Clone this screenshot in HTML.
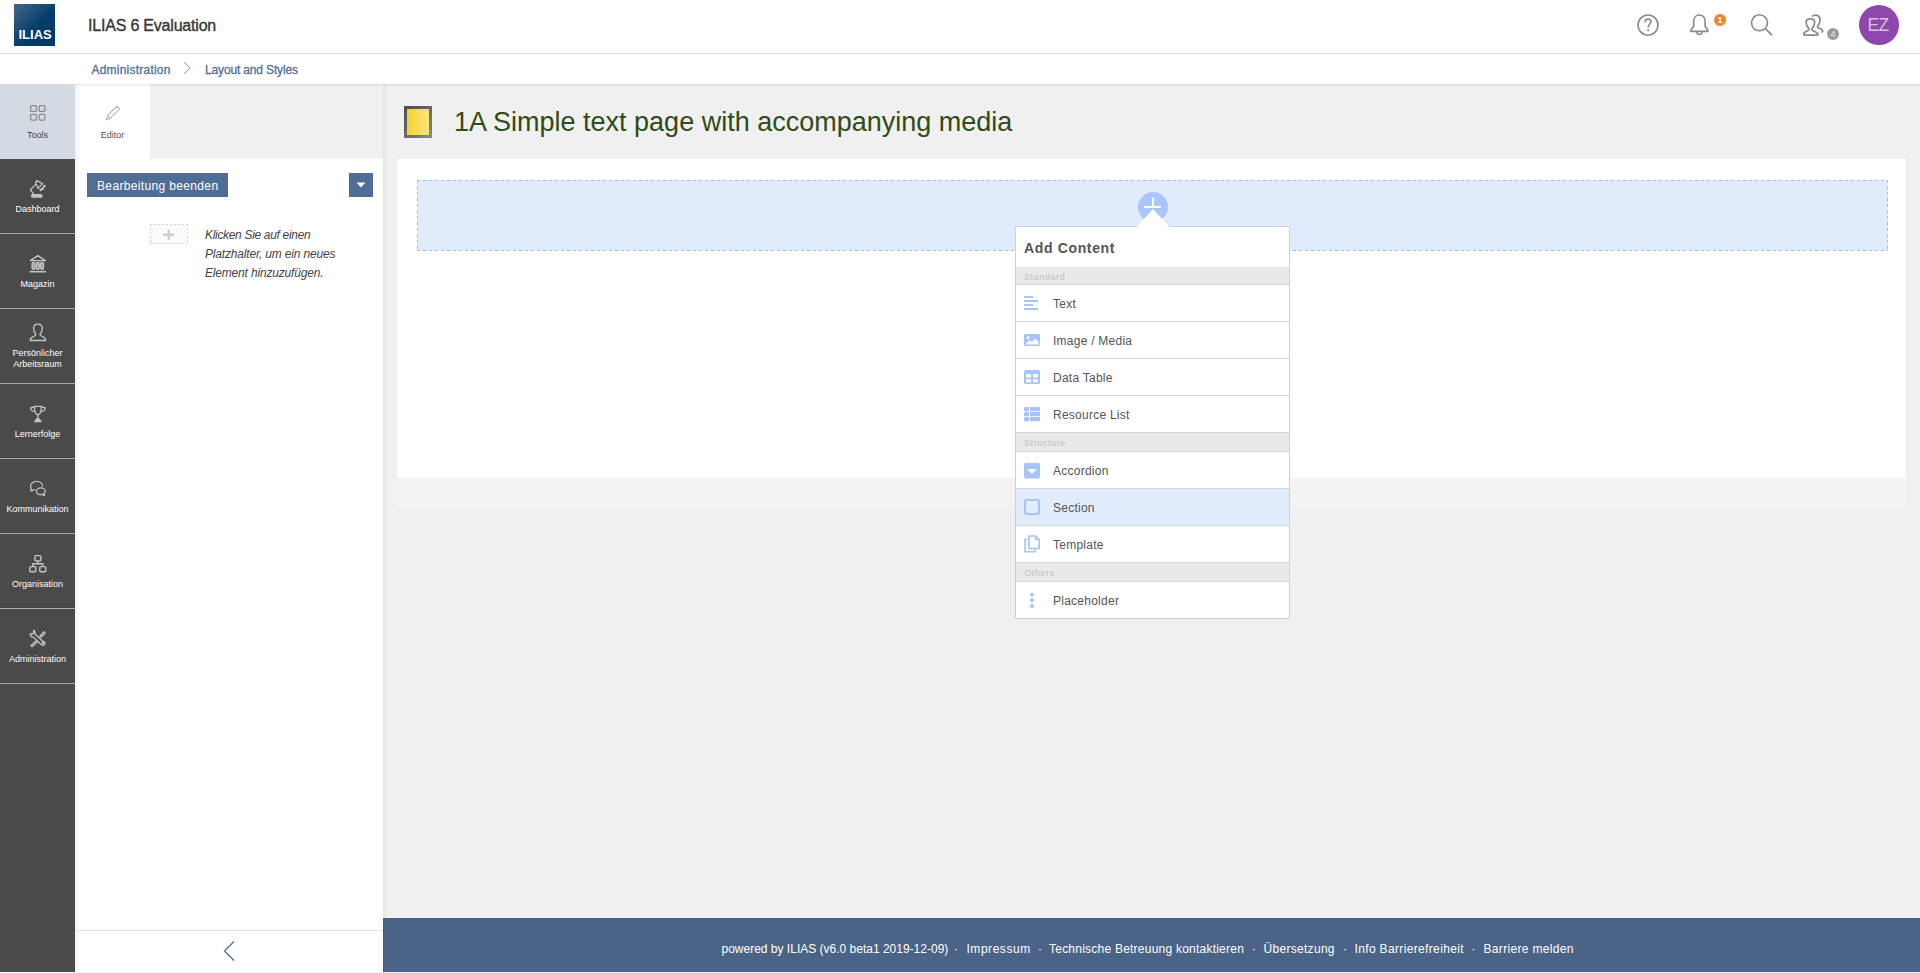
<!DOCTYPE html>
<html><head><meta charset="utf-8">
<style>
*{box-sizing:border-box;margin:0;padding:0}
html,body{width:1920px;height:973px;overflow:hidden;background:#fff;font-family:"Liberation Sans",sans-serif;position:relative}
.a{position:absolute}
.nw{white-space:nowrap}
#hdr{left:0;top:0;width:1920px;height:54px;background:#fff;border-bottom:1px solid #dcdcdc}
#logo{left:14px;top:4px;width:41px;height:42px;background:linear-gradient(135deg,#45668c 0%,#21507b 30%,#053c69 55%,#023864 100%)}
#logo span{position:absolute;left:4.5px;top:24px;font-size:13px;font-weight:bold;color:#fff;letter-spacing:0px;line-height:14px}
#title{left:88px;top:18px;font-size:16px;line-height:16px;color:#383838;-webkit-text-stroke:0.38px #383838;letter-spacing:-0.2px}
.bc{top:64px;font-size:12px;line-height:12px;color:#557196;-webkit-text-stroke:0.32px #557196}
#main{left:383px;top:84px;width:1537px;height:889px;background:#f0f0f0}
#mainshadow{left:383px;top:84px;width:1537px;height:3px;background:linear-gradient(#dedede,#efefef)}
#mbar{left:0;top:84px;width:75px;height:888px;background:#4a4a4a}
.mi{position:absolute;left:0;width:75px;height:75px;border-bottom:1px solid #aaa;box-shadow:inset 0 -1px 0 #434343}
.lbl{position:absolute;left:0;width:75px;text-align:center;font-size:9px;color:#fff;line-height:11px;white-space:nowrap}
.ic{position:absolute;left:24px}
#slate{left:75px;top:84px;width:308px;height:888px;background:#fff}
#slateshadow{left:383px;top:84px;width:5px;height:834px;background:linear-gradient(90deg,#e3e3e3,#f0f0f0)}
#footer{left:383px;top:918px;width:1537px;height:54px;background:#4b6386}
.ft{top:942.5px;font-size:12px;line-height:12px;color:#fff;white-space:nowrap}
#footer .t{position:absolute;left:-3px;top:24.5px;width:1537px;text-align:center;font-size:12px;line-height:12px;color:#fff;white-space:nowrap;letter-spacing:0.24px}
.pi{position:absolute;left:1px;width:273px;height:37px;border-bottom:1px solid #d6d6d6;background:#fff}
.pi .l{position:absolute;left:37px;top:13px;font-size:12px;line-height:12px;color:#555;white-space:nowrap;letter-spacing:0.25px}
.pi svg{position:absolute;left:8px}
.ps{position:absolute;left:1px;width:273px;height:19px;border-bottom:1px solid #d6d6d6;background:#e9e9e9}
.ps .l{position:absolute;left:8px;top:6px;font-size:9px;line-height:9px;color:#c0c0c0;white-space:nowrap;letter-spacing:0.6px}
</style></head><body>
<div id="hdr" class="a"></div>
<div id="logo" class="a"><span>ILIAS</span></div>
<div id="title" class="a nw">ILIAS 6 Evaluation</div>
<span class="a bc nw" style="left:91.5px;letter-spacing:0.22px">Administration</span>
<svg class="a" style="left:182px;top:61px" width="10" height="14"><path d="M2 1 L8 7 L2 13" fill="none" stroke="#b5b5b5" stroke-width="1.1"/></svg>
<span class="a bc nw" style="left:205px;letter-spacing:-0.15px">Layout and Styles</span>

<!-- header right icons -->
<svg class="a" style="left:1636px;top:13px" width="24" height="24" viewBox="0 0 24 24">
 <circle cx="12" cy="12" r="10" fill="none" stroke="#8a8a8a" stroke-width="1.6"/>
 <path d="M9 9.3 C9 6.8 10.5 6 12 6 C13.6 6 15 7 15 8.8 C15 10.6 12.6 11 12.3 13.6 L12.3 14.6" fill="none" stroke="#8a8a8a" stroke-width="1.6"/>
 <circle cx="12.2" cy="17.3" r="1.1" fill="#8a8a8a"/>
</svg>
<svg class="a" style="left:1688px;top:13px" width="24" height="24" viewBox="0 0 24 24">
 <path d="M11.4 2.05 C8 2.05 5.7 4.5 5.7 8 L5.7 13.2 L2.9 17.3 C2.5 18 2.8 18.4 3.5 18.4 L19.3 18.4 C20 18.4 20.3 18 19.9 17.3 L17.1 13.2 L17.1 8 C17.1 4.5 14.8 2.05 11.4 2.05 Z" fill="none" stroke="#8a8a8a" stroke-width="1.6" stroke-linejoin="round"/>
 <path d="M8.7 18.8 A2.7 2.7 0 0 0 14.1 18.8" fill="none" stroke="#8a8a8a" stroke-width="1.5"/>
</svg>
<div class="a" style="left:1714px;top:14px;width:12px;height:12px;border-radius:6px;background:#f5822a"></div>
<div class="a" style="left:1714px;top:15px;width:12px;font-size:9px;line-height:10px;text-align:center;color:#fff;font-weight:bold">1</div>
<svg class="a" style="left:1748px;top:12px" width="28" height="28" viewBox="0 0 28 28">
 <circle cx="11.5" cy="10.8" r="8" fill="none" stroke="#8a8a8a" stroke-width="1.6"/>
 <path d="M17.3 16.5 L24 23.3" stroke="#8a8a8a" stroke-width="1.7"/>
</svg>
<svg class="a" style="left:1800px;top:12px" width="28" height="28" viewBox="0 0 28 28">
 <path d="M3.6 22.3 C3.6 20.6 5 19.9 7.3 18.9 C8.7 18.3 9.4 17.9 9.1 17 C7.3 15 6.1 12.6 6.1 10.4 C6.1 7.8 7.9 6.8 10.4 6.8 C12.9 6.8 14.7 7.8 14.7 10.4 C14.7 12.6 13.5 15 11.7 17 C11.4 17.9 12.1 18.3 13.5 18.9 C15.8 19.9 17.9 20.6 17.9 22.3 C17.9 22.9 17.5 23.1 16.8 23.1 L4.6 23.1 C4 23.1 3.6 22.9 3.6 22.3 Z" fill="none" stroke="#8a8a8a" stroke-width="1.75" stroke-linejoin="round"/>
 <path d="M12 4.4 C12.9 3.5 14 3.1 15.4 3.1 C18.2 3.1 20 4.9 20 7.8 C20 10.2 19.1 12.5 17.4 14.5 C17.2 15.3 17.9 15.7 19.4 16.4 C21.5 17.3 22.8 17.8 22.8 19.1 C22.8 19.7 22.3 20 21.3 20" fill="none" stroke="#8a8a8a" stroke-width="1.75" stroke-linejoin="round"/>
</svg>
<div class="a" style="left:1827px;top:28px;width:12px;height:12px;border-radius:6px;background:#9a9a9a"></div>
<div class="a" style="left:1827px;top:29px;width:12px;font-size:9px;line-height:10px;text-align:center;color:#e8e8f0">4</div>
<div class="a" style="left:1859px;top:5px;width:40px;height:40px;border-radius:20px;background:#8e47ad"></div>
<div class="a" style="left:1858px;top:14.5px;width:40px;font-size:19px;line-height:19px;text-align:center;color:#d8c3e3;letter-spacing:-0.8px;transform:scaleX(0.92)">EZ</div>

<div id="main" class="a"></div>


<!-- main bar -->
<div id="mbar" class="a"></div>
<div class="a" style="left:0;top:84px;width:75px;height:75px;background:#d3dae4"></div>
<svg class="ic" style="top:99px" width="28" height="28" viewBox="0 0 28 28" fill="none" stroke="#8a8a8a" stroke-width="1.3">
 <rect x="6.6" y="6.6" width="5.8" height="5.8" rx="1"/><rect x="15.1" y="6.6" width="5.8" height="5.8" rx="1"/>
 <rect x="6.6" y="15.3" width="5.8" height="5.8" rx="1"/><rect x="15.1" y="15.3" width="5.8" height="5.8" rx="1"/>
</svg>
<div class="lbl a" style="top:130px;color:#444">Tools</div>

<div class="mi" style="top:159px"></div>
<svg class="ic" style="top:174px" width="28" height="28" viewBox="0 0 28 28" fill="none" stroke="#c4c4c4" stroke-width="1.3" stroke-linejoin="round" stroke-linecap="round">
 <path d="M11.6 8.4 L12.8 6.6 L18.6 9.6 L14.2 14.4 Z"/>
 <path d="M11.4 10.6 L6.5 15.8 L9.8 20.4"/>
 <rect x="7.6" y="20.6" width="10.4" height="2.5" rx="1.2" fill="#c4c4c4"/>
 <circle cx="20.3" cy="12.2" r="0.7" fill="#c4c4c4"/><circle cx="18.9" cy="14.6" r="0.7" fill="#c4c4c4"/><circle cx="16.8" cy="15.8" r="0.7" fill="#c4c4c4"/>
</svg>
<div class="lbl a" style="top:204px">Dashboard</div>

<div class="mi" style="top:234px"></div>
<svg class="ic" style="top:250px" width="28" height="28" viewBox="0 0 28 28" fill="none" stroke="#c4c4c4" stroke-width="1.4" stroke-linejoin="round">
 <path d="M6.4 10.6 L13.8 5.7 L21.4 10.6 Z"/>
 <rect x="8.1" y="12.4" width="2.8" height="7" rx="1.3" fill="#9a9a9a"/><rect x="12.4" y="12.4" width="2.8" height="7" rx="1.3" fill="#9a9a9a"/><rect x="16.7" y="12.4" width="2.8" height="7" rx="1.3" fill="#9a9a9a"/>
 <path d="M5.8 21.7 L22 21.7" stroke-width="1.6"/>
</svg>
<div class="lbl a" style="top:279px">Magazin</div>

<div class="mi" style="top:309px"></div>
<svg class="ic" style="top:318px" width="28" height="28" viewBox="0 0 28 28" fill="none" stroke="#c4c4c4" stroke-width="1.3" stroke-linejoin="round">
 <path d="M6.2 22.5 L21.6 22.5 C21.9 20.2 21 19.6 18.7 18.6 C16.6 17.7 15.8 17.3 15.9 16.6 C17.6 14.6 18.3 12.4 18.3 10.6 C18.3 8 16.5 6.2 13.9 6.2 C11.3 6.2 9.6 8 9.6 10.6 C9.6 12.4 10.3 14.6 11.9 16.6 C12 17.3 11.2 17.7 9.1 18.6 C6.8 19.6 5.9 20.2 6.2 22.5 Z"/>
</svg>
<div class="lbl a" style="top:348px">Persönlicher<br>Arbeitsraum</div>

<div class="mi" style="top:384px"></div>
<svg class="ic" style="top:398px" width="28" height="28" viewBox="0 0 28 28" fill="none" stroke="#c4c4c4" stroke-width="1.3" stroke-linejoin="round">
 <path d="M10.4 8.3 L17.4 8.3 C17.4 12 17.4 16.6 13.9 16.6 C10.4 16.6 10.4 12 10.4 8.3 Z"/>
 <path d="M10.2 9 L6.6 9.8 C6.4 11.8 8 13.4 10.6 13.6"/>
 <path d="M17.6 9 L21.2 9.8 C21.4 11.8 19.8 13.4 17.2 13.6"/>
 <path d="M13.9 16.8 L13.9 21"/>
 <path d="M10.8 23.6 L17 23.6 L15.3 21 L12.5 21 Z" fill="#c4c4c4"/>
</svg>
<div class="lbl a" style="top:429px">Lernerfolge</div>

<div class="mi" style="top:459px"></div>
<svg class="ic" style="top:473px" width="28" height="28" viewBox="0 0 28 28" fill="none" stroke="#c4c4c4" stroke-width="1.3" stroke-linejoin="round">
 <path d="M18.6 13.5 C18.6 10.2 15.9 8.3 12.7 8.3 C9.3 8.3 6.6 10.3 6.6 13.2 C6.6 14.4 7 15.2 7.2 16 L6.9 17.8 L10.8 16.6"/>
 <ellipse cx="16.8" cy="18.3" rx="4.5" ry="3.4"/>
 <path d="M19.8 20.8 L20.6 22.8 L18.4 21.6" fill="#c4c4c4"/>
</svg>
<div class="lbl a" style="top:504px">Kommunikation</div>

<div class="mi" style="top:534px"></div>
<svg class="ic" style="top:548px" width="28" height="28" viewBox="0 0 28 28" fill="none" stroke="#c4c4c4" stroke-width="1.4" stroke-linejoin="round">
 <rect x="10.9" y="7.6" width="6" height="5.3" rx="1"/>
 <path d="M13.9 13 L13.9 15.8 M8.8 18.3 L8.8 15.8 L18.8 15.8 L18.8 18.3"/>
 <rect x="5.8" y="18.6" width="6" height="5.1" rx="1"/>
 <rect x="15.8" y="18.6" width="6" height="5.1" rx="1"/>
</svg>
<div class="lbl a" style="top:579px">Organisation</div>

<div class="mi" style="top:609px"></div>
<svg class="ic" style="top:623px" width="28" height="28" viewBox="0 0 28 28" fill="none" stroke="#c4c4c4" stroke-width="1.3" stroke-linejoin="round" stroke-linecap="round">
 <path d="M6.3 10.6 C5.9 12.6 7.4 14.4 9.4 14.1 L17.1 21.5 C18 22.6 19.9 22.7 20.7 21.4 C21.5 20 20.5 18.1 18.6 18.2 L10.9 10.7 C11.3 9 10.7 7.8 9.6 7.3 L9.7 9.7 L8.1 11.2 Z"/>
 <circle cx="18.9" cy="20" r="0.6" fill="#c4c4c4"/>
 <path d="M16.3 12.6 L19.6 9.2 C20.4 8.4 21.6 9.6 20.8 10.4 L17.5 13.8 C16.7 14.6 15.5 13.4 16.3 12.6 Z"/>
 <path d="M12.2 17.6 L7.4 22.2 C6.6 23 7.8 24.2 8.6 23.4 L13.4 18.8"/>
</svg>
<div class="lbl a" style="top:654px">Administration</div>

<!-- slate -->
<div id="slate" class="a"></div>
<div class="a" style="left:150px;top:84px;width:233px;height:75px;background:#f0f0f0"></div>
<div class="a" style="left:75px;top:84px;width:6px;height:888px;background:linear-gradient(90deg,#f2f2f2,rgba(255,255,255,0))"></div>
<svg class="a" style="left:98px;top:98px" width="28" height="28" viewBox="0 0 28 28" fill="none" stroke="#b8b8b8" stroke-width="1.2" stroke-linejoin="round">
 <path d="M8.2 21.8 L9.4 17.6 L18.9 8.2 L21.6 10.8 L12.2 20.4 Z"/>
 <path d="M9.4 17.6 L12.2 20.4"/>
</svg>
<div class="lbl a" style="left:75px;top:130px;color:#555">Editor</div>

<div class="a" style="left:87px;top:173px;width:141px;height:24px;background:#4f6d95"></div>
<div class="a nw" style="left:97px;top:180px;font-size:12px;line-height:12px;color:#fff;letter-spacing:0.35px">Bearbeitung beenden</div>
<div class="a" style="left:349px;top:173px;width:24px;height:24px;background:#4f6d95"></div>
<svg class="a" style="left:349px;top:173px" width="24" height="24"><path d="M7.5 9.5 L16.5 9.5 L12 14.5 Z" fill="#fff"/></svg>

<div class="a" style="left:150px;top:224px;width:38px;height:20px;background:#fafafa"></div><div class="a" style="left:150px;top:224px;width:38px;height:1px;background:repeating-linear-gradient(90deg,#d6d6d6 0 2px,transparent 2px 4px)"></div><div class="a" style="left:150px;top:243px;width:38px;height:1px;background:repeating-linear-gradient(90deg,#d6d6d6 0 2px,transparent 2px 4px)"></div><div class="a" style="left:150px;top:224px;width:1px;height:20px;background:repeating-linear-gradient(180deg,#d6d6d6 0 2px,transparent 2px 4px)"></div><div class="a" style="left:187px;top:224px;width:1px;height:20px;background:repeating-linear-gradient(180deg,#d6d6d6 0 2px,transparent 2px 4px)"></div>
<svg class="a" style="left:150px;top:224px" width="38" height="20"><path d="M18.9 5.8 L18.9 15.7 M13.2 10.7 L24.1 10.7" stroke="#cdcdcd" stroke-width="2.6"/></svg>
<div class="a nw" style="left:205px;top:226.3px;font-size:12px;line-height:18.7px;color:#444;font-style:italic;letter-spacing:-0.18px"><span style="letter-spacing:-0.32px">Klicken Sie auf einen</span><br>Platzhalter, um ein neues<br>Element hinzuzufügen.</div>

<div class="a" style="left:75px;top:930px;width:308px;height:1px;background:#e2e2e2"></div>
<svg class="a" style="left:220px;top:938px" width="18" height="26"><path d="M14 3.5 L4.5 13 L14 22.5" fill="none" stroke="#4f6d95" stroke-width="1.3"/></svg>

<!-- slate right shadow -->
<div id="slateshadow" class="a"></div>

<div class="a" style="left:75px;top:84px;width:1845px;height:3px;background:linear-gradient(rgba(0,0,0,0.075),rgba(0,0,0,0.03) 50%,rgba(0,0,0,0))"></div>
<!-- content -->
<div class="a" style="left:404px;top:106px;width:28px;height:32px;background:linear-gradient(135deg,#4a4a4a,#8a8a8a)"></div>
<div class="a" style="left:407px;top:109px;width:22px;height:26px;background:linear-gradient(90deg,#f3d232,#fde47c)"></div>
<div class="a nw" style="left:454px;top:107.5px;font-size:27px;line-height:28px;color:#2f4b17">1A Simple text page with accompanying media</div>

<div class="a" style="left:397px;top:159px;width:1509px;height:319px;background:#fff;box-shadow:0 0 1px rgba(0,0,0,0.06)"></div>
<div class="a" style="left:397px;top:478px;width:1509px;height:30px;background:#f3f3f3"></div>
<div class="a" style="left:417px;top:180px;width:1471px;height:71px;background:#e0ebfc"></div><div class="a" style="left:417px;top:180px;width:1471px;height:1px;background:repeating-linear-gradient(90deg,#9dbdf5 0 3px,transparent 3px 6px)"></div><div class="a" style="left:417px;top:250px;width:1471px;height:1px;background:repeating-linear-gradient(90deg,#9dbdf5 0 3px,transparent 3px 6px)"></div><div class="a" style="left:417px;top:180px;width:1px;height:71px;background:repeating-linear-gradient(180deg,#9dbdf5 0 3px,transparent 3px 6px)"></div><div class="a" style="left:1887px;top:180px;width:1px;height:71px;background:repeating-linear-gradient(180deg,#9dbdf5 0 3px,transparent 3px 6px)"></div><div class="a" style="left:1887px;top:250px;width:1px;height:1px;background:#9dbdf5"></div>
<div class="a" style="left:1138px;top:192px;width:30px;height:30px;border-radius:15px;background:#a8c6fa"></div>
<svg class="a" style="left:1138px;top:192px" width="30" height="30"><path d="M15 6 L15 15 M6 15 L23 15" stroke="#fff" stroke-width="2"/></svg>

<!-- popover -->
<div class="a" style="left:1015px;top:226px;width:275px;height:393px;background:#fff;border:1px solid #cfcfcf"></div>
<svg class="a" style="left:1133px;top:207px" width="40" height="21"><path d="M3 20.5 L20 2 L37 20.5 Z" fill="#fff"/></svg>
<div class="a nw" style="left:1024px;top:241px;font-size:14px;line-height:14px;font-weight:bold;color:#555;letter-spacing:0.65px">Add Content</div>
<div class="a" style="left:1015px;top:226px;width:275px;height:393px">
 <div class="ps" style="top:41px;height:18px"><span class="l">Standard</span></div>
 <div class="pi" style="top:59px"><svg style="top:11px" width="16" height="16"><path d="M0 1 H9 M0 5 H14 M0 9 H9 M0 13 H14" stroke="#a6c4f7" stroke-width="2"/></svg><span class="l">Text</span></div>
 <div class="pi" style="top:96px"><svg style="top:12px" width="17" height="14" viewBox="0 0 17 14"><rect x="0" y="0" width="16" height="12" rx="1.5" fill="#a6c4f7"/><path d="M1.5 10.5 L5.5 6 L8 8 L11 4.5 L14.5 8 L14.5 10.5 Z" fill="#fff"/><circle cx="4" cy="3.6" r="1.6" fill="#fff"/></svg><span class="l">Image / Media</span></div>
 <div class="pi" style="top:133px"><svg style="top:11px" width="17" height="15" viewBox="0 0 17 15"><rect x="0" y="0" width="16" height="14" rx="1.5" fill="#a6c4f7"/><rect x="2" y="4" width="5.2" height="3.6" fill="#fff"/><rect x="9" y="4" width="5" height="3.6" fill="#fff"/><rect x="2" y="9.3" width="5.2" height="3" fill="#fff"/><rect x="9" y="9.3" width="5" height="3" fill="#fff"/></svg><span class="l">Data Table</span></div>
 <div class="pi" style="top:170px"><svg style="top:11px" width="17" height="15" viewBox="0 0 17 15"><rect x="0" y="0" width="5" height="4.2" rx="1" fill="#a6c4f7"/><rect x="6" y="0" width="10" height="4.2" fill="#a6c4f7"/><rect x="0" y="5" width="5" height="4.2" rx="1" fill="#a6c4f7"/><rect x="6" y="5" width="10" height="4.2" fill="#a6c4f7"/><rect x="0" y="10" width="5" height="4.2" rx="1" fill="#a6c4f7"/><rect x="6" y="10" width="10" height="4.2" fill="#a6c4f7"/></svg><span class="l">Resource List</span></div>
 <div class="ps" style="top:207px"><span class="l">Structure</span></div>
 <div class="pi" style="top:226px"><svg style="top:11px" width="17" height="17" viewBox="0 0 17 17"><rect x="0" y="0" width="16" height="15.5" rx="1.5" fill="#a6c4f7"/><path d="M3 6 L13 6 L8 11 Z" fill="#fff"/></svg><span class="l">Accordion</span></div>
 <div class="pi" style="top:263px;background:#e0ebfc"><svg style="top:10px" width="17" height="17" viewBox="0 0 17 17"><rect x="1" y="1" width="14" height="14" rx="1.5" fill="none" stroke="#a6c4f7" stroke-width="2"/></svg><span class="l">Section</span></div>
 <div class="pi" style="top:300px"><svg style="top:8px" width="17" height="20" viewBox="0 0 17 20"><path d="M5 2 L11.8 2 L15.2 5.4 L15.2 14.5 L5 14.5 Z" fill="none" stroke="#a6c4f7" stroke-width="1.6" stroke-linejoin="round"/><path d="M11.5 2 L11.5 5.6 L15 5.6" fill="none" stroke="#a6c4f7" stroke-width="1.4"/><path d="M3.4 5.2 L1 5.2 L1 17.8 L10.8 17.8 L10.8 15" fill="none" stroke="#a6c4f7" stroke-width="1.6" stroke-linejoin="round"/></svg><span class="l">Template</span></div>
 <div class="ps" style="top:337px"><span class="l">Others</span></div>
 <div class="pi" style="top:356px;height:36px;border-bottom:none"><svg style="top:10px" width="17" height="18"><circle cx="8" cy="2.5" r="2" fill="#a6c4f7"/><circle cx="8" cy="8.2" r="2" fill="#a6c4f7"/><circle cx="8" cy="14" r="2" fill="#a6c4f7"/></svg><span class="l">Placeholder</span></div>
</div>

<div id="footer" class="a"></div><div class="a" style="left:383px;top:917px;width:1537px;height:1px;background:#f6f6f4"></div><div class="a" style="left:383px;top:918px;width:1537px;height:1px;background:#435b7e"></div><div class="a" style="left:383px;top:918px;width:1px;height:54px;background:#435b7e"></div><span class="a ft" style="left:721.5px;letter-spacing:0px">powered by ILIAS (v6.0 beta1 2019-12-09)</span><span class="a ft" style="left:966.5px;letter-spacing:0.54px">Impressum</span><span class="a ft" style="left:1049px;letter-spacing:0.23px">Technische Betreuung kontaktieren</span><span class="a ft" style="left:1263.5px;letter-spacing:0.3px">Übersetzung</span><span class="a ft" style="left:1354.5px;letter-spacing:0.35px">Info Barrierefreiheit</span><span class="a ft" style="left:1483.5px;letter-spacing:0.33px">Barriere melden</span><span class="a ft" style="left:954px">·</span><span class="a ft" style="left:1038px">·</span><span class="a ft" style="left:1252px">·</span><span class="a ft" style="left:1343px">·</span><span class="a ft" style="left:1471.5px">·</span>
<div class="a" style="left:75px;top:972px;width:1845px;height:1px;background:#efefef"></div>
</body></html>
